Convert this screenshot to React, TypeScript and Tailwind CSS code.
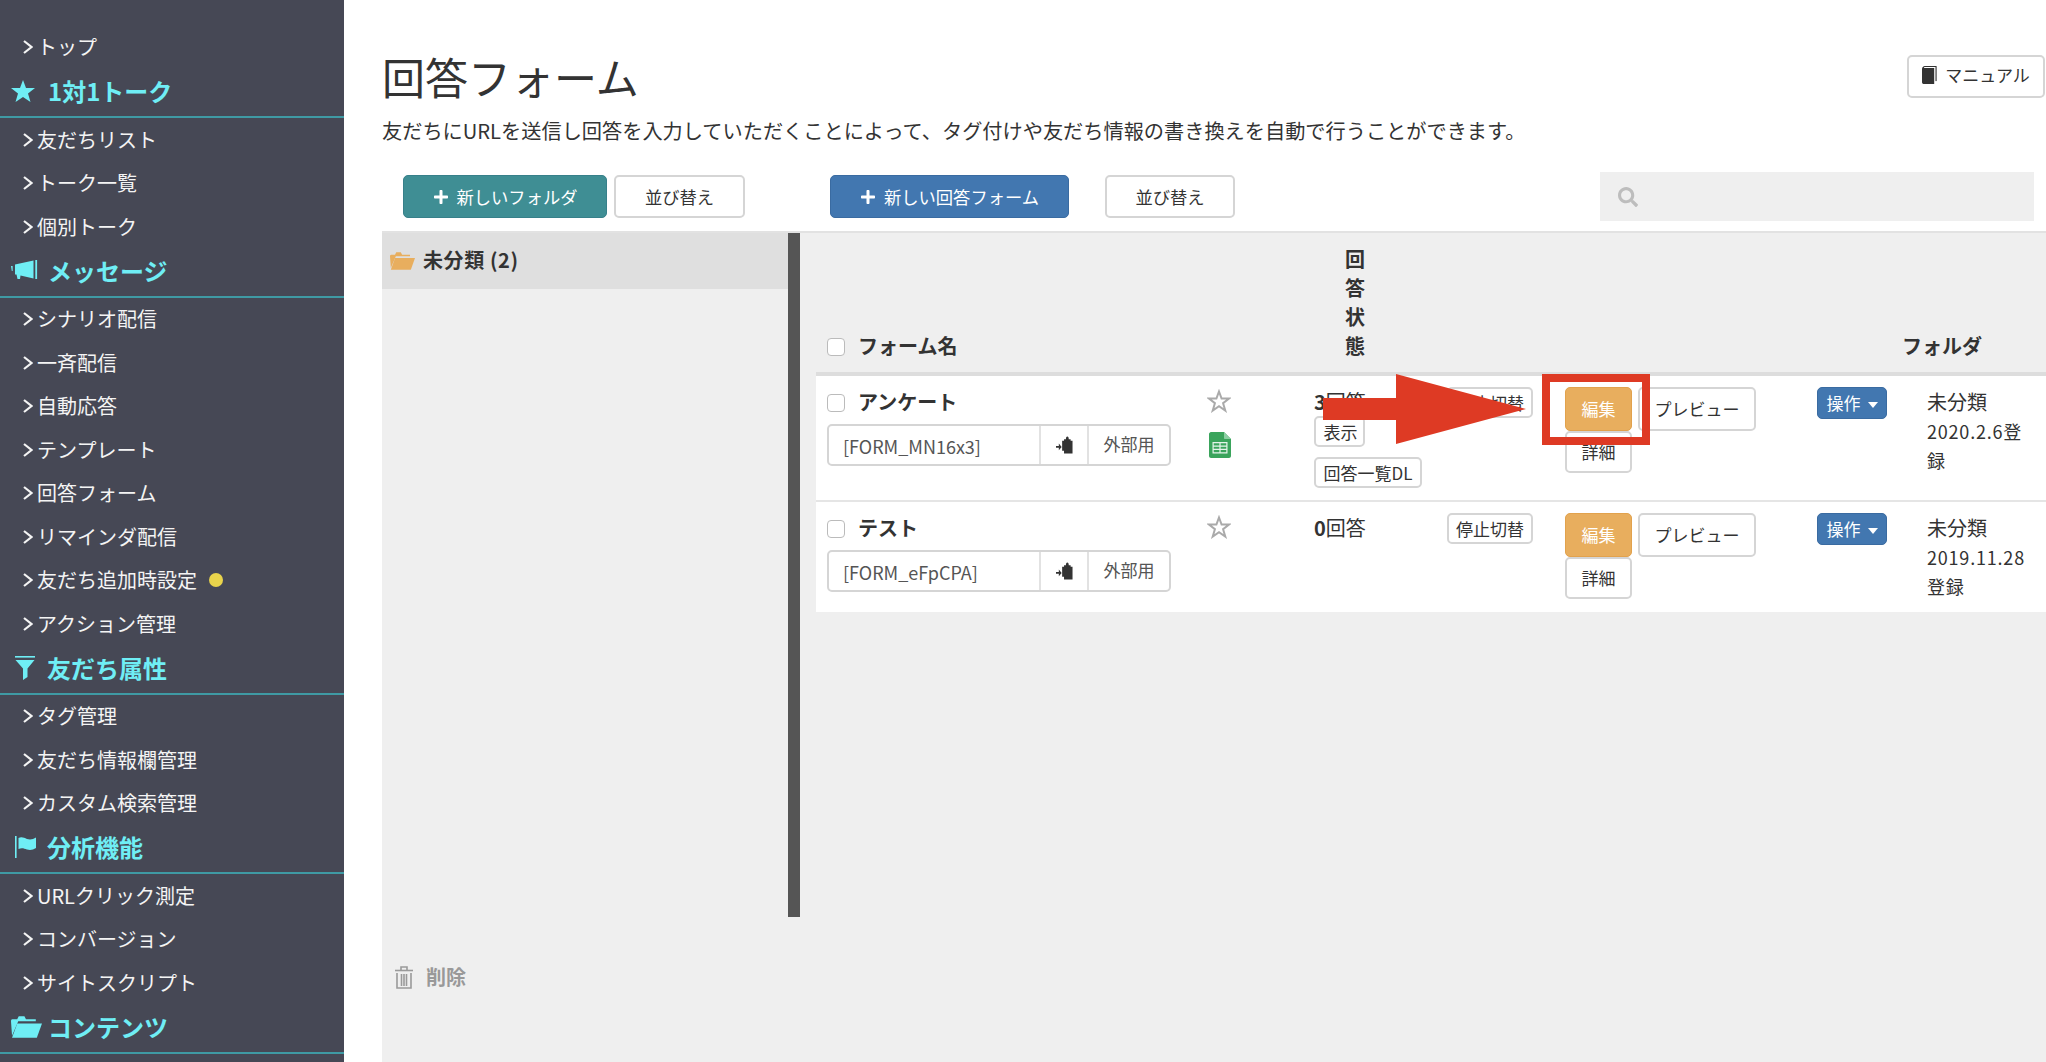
import React from "react";
import { FaPlus, FaSearch } from "react-icons/fa";

function Star({ className }: { className: string }) {
  return (
    <svg viewBox="0 0 24 24" className={className} fill="currentColor">
      <polygon points="12,1 15,9 24,9 17,14.5 19.5,23 12,18 4.5,23 7,14.5 0,9 9,9" />
    </svg>
  );
}

function StarEmpty() {
  return (
    <svg viewBox="0 0 24 24" className="w-[24px] h-[24px] ml-[7px] mt-[2px] text-[#aaaaaa]" fill="none" stroke="currentColor" strokeWidth="2">
      <polygon points="12,2.5 14.6,9.6 22,9.6 16.1,14.2 18.3,21.6 12,17.2 5.7,21.6 7.9,14.2 2,9.6 9.4,9.6" />
    </svg>
  );
}

function Bullhorn() {
  return (
    <svg viewBox="0 0 27 21" className="w-[27px] h-[21px]" fill="currentColor">
      <path d="M0 6h1.600v5H.8z" />
      <path d="M4 4.500 L22.500 0.500 V18.500 L9.500 15.500 L9 19 H6.500 L5.500 14.500 H4 Z" />
      <rect x="24.300" y="0" width="1.800" height="19" />
    </svg>
  );
}

function Funnel() {
  return (
    <svg viewBox="0 0 20 24" className="w-[20px] h-[24px]" fill="currentColor">
      <rect x="0" y="0" width="20" height="1.6" />
      <path d="M0.5 4 H19.5 L12.5 12.5 V21 L8 24 V12.5 Z" />
    </svg>
  );
}

function Flag() {
  return (
    <svg viewBox="0 0 21 22" className="w-[21px] h-[22px]" fill="currentColor">
      <rect x="0" y="0" width="1.6" height="22" />
      <path d="M3.5 2 C7 0.5 9 2 12 3 C15 4 18 3.5 21 1.5 V12 C18 14 15 14.5 12 13.5 C9 12.5 7 11.5 3.5 13 Z" />
    </svg>
  );
}

function FolderOpen({ className }: { className: string }) {
  return (
    <svg viewBox="0 0 30 22" className={className} fill="currentColor">
      <path d="M1 20 L0 6 C0 4 1 4 2 4 H6 L7.5 1 H13 L14.5 4 H24 V6 H7 Z" />
      <path d="M6 8 H30 L25 22 H1 Z" />
    </svg>
  );
}

function Book() {
  return (
    <svg viewBox="0 0 16 19" className="w-[15px] h-[18px]" fill="currentColor">
      <path d="M0 3 C0 1.5 1.5 0 3 0 H15 V1 H3.5 C2.5 1 2 1.6 2 2 H13 V19 H1.5 C.5 19 0 18 0 17 Z" />
      <rect x="14.4" y="0" width="1.2" height="16" />
    </svg>
  );
}

function Paste() {
  return (
    <svg viewBox="0 0 18 19" className="w-[17px] h-[18px]" fill="currentColor">
      <path d="M6.500 5 H8.500 V3.500 H10.500 C10.500 1.500 11 0.500 12 0.500 C13 0.500 13.500 1.500 13.500 3.500 H15.500 V5 H17.500 V18.500 H8.500 V15.500 H6.500 Z" />
      <path d="M0 10.500 H3 V8 L6 11.500 L3 15 V12.500 H0 Z" />
    </svg>
  );
}

function Sheet() {
  return (
    <svg viewBox="0 0 22 26" className="w-[22px] h-[26px]">
      <path d="M2 0 H15 L22 7 V24 C22 25 21 26 20 26 H2 C1 26 0 25 0 24 V2 C0 1 1 0 2 0 Z" fill="#3aa45c" />
      <path d="M15 0 L22 7 H16 C15.400 7 15 6.600 15 6 Z" fill="#8ccfa3" />
      <path d="M3.500 10 H18.500 V21.500 H3.500 Z M4.700 11.200 V13.600 H10.400 V11.200 Z M11.600 11.200 V13.600 H17.300 V11.200 Z M4.700 14.700 V16.800 H10.400 V14.700 Z M11.600 14.700 V16.800 H17.300 V14.700 Z M4.700 17.900 V20.300 H10.400 V17.900 Z M11.600 17.900 V20.300 H17.300 V17.900 Z" fill="#e4f3e9" fillRule="evenodd" />
    </svg>
  );
}

function Trash() {
  return (
    <svg viewBox="0 0 18 23" className="w-[18px] h-[23px]" fill="none" stroke="#9a9a9a" strokeWidth="1.6">
      <path d="M0 4.500 H18" />
      <path d="M6 4 V1 H12 V4" />
      <path d="M2 7 V22 H16 V7" />
      <path d="M6.500 8 V20 M9 8 V20 M11.500 8 V20" />
    </svg>
  );
}

function NavItem({ label, dot }: { label: string; dot?: boolean }) {
  return (
    <div className="h-[43.5px] flex items-center pl-[23px] text-[20px] text-[#f4f4f4]">
      <svg viewBox="0 0 10 14" className="w-[10px] h-[14px] mr-[4px] shrink-0" fill="none" stroke="currentColor" strokeWidth="2.2">
        <polyline points="1,1 8.500,7 1,13" />
      </svg>
      <span>{label}</span>
      {dot && <span className="ml-[12px] w-[14px] h-[14px] rounded-full bg-[#e9d44c]" />}
    </div>
  );
}

function NavHead({ icon, label, left }: { icon: React.ReactNode; label: string; left?: string }) {
  return (
    <div className="h-[49px] flex items-center pb-[3px] border-b-2 border-[#3f9aa4] text-[#6feef5]">
      <div className="w-[48px] flex items-center pl-[11px] shrink-0">{icon}</div>
      <span className={`text-[24px] font-bold ${left ?? ""}`}>{label}</span>
    </div>
  );
}

function Sidebar() {
  return (
    <div className="w-[344px] shrink-0 h-full bg-[#464855] pt-[25.500px] overflow-hidden">
      <NavItem label="トップ" />
      <NavHead icon={<Star className="w-[24px] h-[24px]" />} label="1対1トーク" />
      <NavItem label="友だちリスト" />
      <NavItem label="トーク一覧" />
      <NavItem label="個別トーク" />
      <NavHead icon={<Bullhorn />} label="メッセージ" />
      <NavItem label="シナリオ配信" />
      <NavItem label="一斉配信" />
      <NavItem label="自動応答" />
      <NavItem label="テンプレート" />
      <NavItem label="回答フォーム" />
      <NavItem label="リマインダ配信" />
      <NavItem label="友だち追加時設定" dot />
      <NavItem label="アクション管理" />
      <NavHead icon={<div className="pl-[4px]"><Funnel /></div>} label="友だち属性" left="-ml-px" />
      <NavItem label="タグ管理" />
      <NavItem label="友だち情報欄管理" />
      <NavItem label="カスタム検索管理" />
      <NavHead icon={<div className="pl-[4px]"><Flag /></div>} label="分析機能" left="-ml-px" />
      <NavItem label="URLクリック測定" />
      <NavItem label="コンバージョン" />
      <NavItem label="サイトスクリプト" />
      <NavHead icon={<FolderOpen className="w-[31px] h-[23px]" />} label="コンテンツ" />
    </div>
  );
}

function SmallBtn({ children, className }: { children: React.ReactNode; className?: string }) {
  return (
    <button className={`h-[31px] px-[7.500px] bg-white border-2 border-[#d5d5d5] rounded-[5px] text-[17px] leading-none text-[#333] whitespace-nowrap ${className ?? ""}`}>
      {children}
    </button>
  );
}

function TagInput({ code }: { code: string }) {
  return (
    <div className="mt-[8px] w-[344px] h-[42px] flex bg-white border-2 border-[#d5d5d5] rounded-[5px] text-[#555]">
      <div className="w-[212px] flex items-center pl-[14px] pt-[2px] border-r-2 border-[#e2e2e2] text-[18px]">{code}</div>
      <div className="w-[48px] flex items-center justify-center border-r-2 border-[#e2e2e2] text-[#333]"><Paste /></div>
      <div className="flex-1 flex items-center justify-center text-[17px] pb-[2px]">外部用</div>
    </div>
  );
}

function Row({ name, code, height, status, sheet, date, date2, showBtns }: {
  name: string;
  code: string;
  height: string;
  status: React.ReactNode;
  sheet?: boolean;
  date: string;
  date2: string;
  showBtns?: boolean;
}) {
  return (
    <div className={`flex pl-[11px] pt-[11px] bg-white ${height}`}>
      <div className="w-[373px] shrink-0">
        <div className="h-[29px] flex items-center">
          <input type="checkbox" className="appearance-none w-[18px] h-[18px] mt-[2px] bg-white border border-[#bbbbbb] rounded-[4px] mr-[13px]" />
          <span className="text-[20px] font-bold text-[#333]">{name}</span>
        </div>
        <TagInput code={code} />
      </div>
      <div className="w-[114px] shrink-0">
        <StarEmpty />
        {sheet && <div className="ml-[9px] mt-[19px]"><Sheet /></div>}
      </div>
      <div className="w-[133px] shrink-0">
        <div className="h-[29px] leading-[29px] text-[20px] text-[#333] whitespace-nowrap">{status}</div>
        {showBtns && (
          <div className="flex flex-col items-start">
            <SmallBtn className="w-[51px]">表示</SmallBtn>
            <SmallBtn className="mt-[10px]">回答一覧DL</SmallBtn>
          </div>
        )}
      </div>
      <div className="w-[118px] shrink-0">
        <SmallBtn className="w-[86px] !px-0">停止切替</SmallBtn>
      </div>
      <div className="w-[252px] shrink-0 flex items-start">
        <div className="w-[67px] flex flex-col">
          <button className="h-[44px] bg-[#e8ae5e] border border-[#e2a24d] rounded-[5px] text-white text-[17px]">編集</button>
          <button className="h-[42px] bg-white border-2 border-[#d5d5d5] rounded-[5px] text-[#333] text-[17px]">詳細</button>
        </div>
        <button className="ml-[6px] w-[118px] h-[44px] bg-white border-2 border-[#d5d5d5] rounded-[5px] text-[#333] text-[17px]">プレビュー</button>
      </div>
      <div className="w-[110px] shrink-0">
        <button className="w-[70px] h-[32px] bg-[#4277b0] border border-[#3a6ba1] rounded-[5px] text-white text-[17px] flex items-center justify-center">
          操作
          <span className="ml-[7px] mt-[3px] w-0 h-0 border-x-[5px] border-x-transparent border-t-[6px] border-t-white" />
        </button>
      </div>
      <div className="flex-1 text-[#333]">
        <div className="h-[29px] leading-[29px] text-[20px]">未分類</div>
        <div className="pt-px text-[18px] leading-[29px] tracking-[0.800px] w-[104px] break-all">
          {date}
          <br />
          {date2}
        </div>
      </div>
    </div>
  );
}

export default function App() {
  return (
    <div className="h-screen w-full flex overflow-hidden bg-white relative font-['Noto_Sans_CJK_JP','Noto_Sans',sans-serif]">
      <Sidebar />
      <div className="flex-1 flex flex-col pl-[38px] min-w-0">
        <div className="flex justify-between items-start pt-[55px] pr-px">
          <h1 className="h-[48px] leading-[42px] text-[43px] text-[#333] font-normal">回答フォーム</h1>
          <button className="w-[138px] h-[43px] flex items-center justify-center gap-[8px] pb-[3px] bg-white border-2 border-[#d5d5d5] rounded-[5px] text-[17px] text-[#333]">
            <Book />
            マニュアル
          </button>
        </div>
        <p className="mt-[13px] h-[30px] leading-[30px] text-[20.200px] text-[#333]">友だちにURLを送信し回答を入力していただくことによって、タグ付けや友だち情報の書き換えを自動で行うことができます。</p>
        <div className="mt-[26px] h-[49px] flex items-center pl-[21px] pr-[12px] text-[17.300px]">
          <button className="w-[204px] h-[43px] bg-[#3f8e94] border border-[#37808a] rounded-[5px] text-white flex items-center justify-center gap-[8px]">
            <FaPlus className="w-[16px] h-[16px]" />
            新しいフォルダ
          </button>
          <button className="ml-[7px] w-[131px] h-[43px] bg-white border-2 border-[#d5d5d5] rounded-[5px] text-[#333]">並び替え</button>
          <button className="ml-[85px] w-[239px] h-[43px] bg-[#4277b0] border border-[#3a6ba1] rounded-[5px] text-white flex items-center justify-center gap-[8px]">
            <FaPlus className="w-[16px] h-[16px]" />
            新しい回答フォーム
          </button>
          <button className="ml-[36px] w-[130px] h-[43px] bg-white border-2 border-[#d5d5d5] rounded-[5px] text-[#333]">並び替え</button>
          <div className="ml-auto w-[434px] h-[49px] bg-[#efefef] flex items-center pl-[18px]">
            <FaSearch className="w-[20px] h-[20px] text-[#bdbdbd]" />
          </div>
        </div>
        <div className="mt-[10px] flex-1 bg-[#efefef] border-t-2 border-[#e2e2e2]">
          <div className="flex h-[684px]">
            <div className="w-[406px] shrink-0">
              <div className="h-[56px] bg-[#dfdfdf] flex items-center pl-[8px] pb-[2px] text-[#333]">
                <FolderOpen className="w-[25px] h-[19px] text-[#e8ae5e] mr-[8px]" />
                <span className="text-[20px] font-bold tracking-[0.600px]">未分類 (2)</span>
              </div>
            </div>
            <div className="w-[12px] shrink-0 bg-[#555555]" />
            <div className="flex-1 ml-[16px]">
              <div className="h-[143px] flex items-end pl-[11px] pb-[12px] border-b-4 border-[#dddddd]">
                <div className="w-[518px] h-[29px] flex items-center shrink-0">
                  <input type="checkbox" className="appearance-none w-[18px] h-[18px] mt-[2px] bg-white border border-[#bbbbbb] rounded-[4px] mr-[13px]" />
                  <span className="text-[20px] font-bold text-[#333]">フォーム名</span>
                </div>
                <div className="w-[20px] text-[20px] leading-[29px] font-bold text-[#333] break-all shrink-0">回答状態</div>
                <div className="ml-[537px] h-[29px] leading-[29px] text-[20px] font-bold text-[#333]">フォルダ</div>
              </div>
              <Row
                name="アンケート"
                code="[FORM_MN16x3]"
                height="h-[124px]"
                status={<><b>3</b>回答</>}
                sheet
                date="2020.2.6登"
                date2="録"
                showBtns
              />
              <div className="h-[2px] bg-[#e5e5e5]" />
              <Row
                name="テスト"
                code="[FORM_eFpCPA]"
                height="h-[110px]"
                status={<><b>0</b>回答</>}
                date="2019.11.28"
                date2="登録"
              />
            </div>
          </div>
          <div className="mt-[45px] pl-[13px] flex items-center gap-[13px] text-[#999] text-[20px] font-bold">
            <Trash />
            削除
          </div>
        </div>
      </div>
      {/* red annotation over the table */}
      <div className="absolute left-[1542px] top-[374px] w-[108px] h-[71px] border-[8px] border-[#de3a24]" />
      <svg viewBox="0 0 203 70" className="absolute left-[1323px] top-[374px] w-[203px] h-[70px]" fill="#de3a24">
        <polygon points="0,24 73,24 73,0 203,35 73,70 73,46 0,46" />
      </svg>
    </div>
  );
}
